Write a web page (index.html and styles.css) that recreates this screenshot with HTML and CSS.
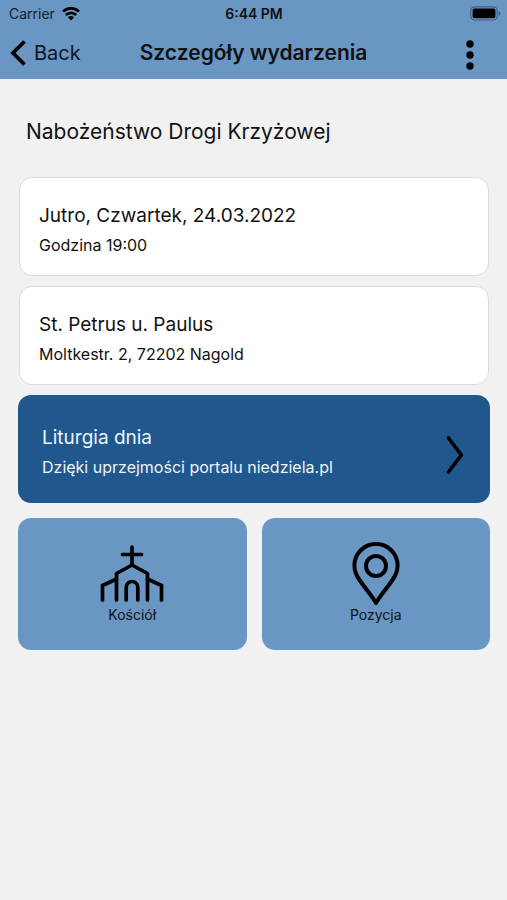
FILE: index.html
```html
<!DOCTYPE html>
<html lang="pl">
<head>
<meta charset="utf-8">
<meta name="viewport" content="width=device-width, initial-scale=1">
<title>Szczegóły wydarzenia</title>
<link rel="stylesheet" href="styles.css">
</head>
<body>
<header class="top">
  <div class="status">
    <div class="carrier">
      <span>Carrier</span>
      <svg width="18" height="14" viewBox="0 0 18 14" aria-hidden="true">
        <path d="M1 4.400C5.400.2 12.600.2 17 4.400" fill="none" stroke="#000" stroke-width="2.800"/>
        <path d="M3.800 8C6.700 5.200 11.300 5.200 14.200 8" fill="none" stroke="#000" stroke-width="2.500"/>
        <path d="M5.900 10.200Q9 7.800 12.100 10.200L9 13.400Z"/>
      </svg>
    </div>
    <div class="time">6:44 PM</div>
    <svg class="battery" width="31" height="15" viewBox="0 0 31 15" aria-hidden="true">
      <rect x=".8" y=".8" width="26.4" height="13.2" rx="4" fill="none" stroke="#42607f" stroke-width="1.2"/>
      <rect x="2.6" y="2.6" width="22.8" height="9.6" rx="2"/>
      <path d="M28.6 5Q30.6 5.6 30.6 7.4T28.6 9.8Z" fill="#42607f"/>
    </svg>
  </div>
  <nav class="nav">
    <a class="back" href="#">
      <svg width="16" height="26" viewBox="0 0 16 26" aria-hidden="true"><path d="M14.500 1.500L3 13L14.500 24.500" fill="none" stroke="#000" stroke-width="3.8"/></svg>
      <span>Back</span>
    </a>
    <h1 class="heading">Szczegóły wydarzenia</h1>
    <button class="more" type="button" aria-label="Menu">
      <svg width="8" height="30" viewBox="0 0 8 30" aria-hidden="true"><circle cx="4" cy="4" r="3.7"/><circle cx="4" cy="15" r="3.7"/><circle cx="4" cy="26" r="3.7"/></svg>
    </button>
  </nav>
</header>
<main class="content">
  <h2 class="event">Nabożeństwo Drogi Krzyżowej</h2>
  <section class="card">
    <p class="primary">Jutro, Czwartek, 24.03.2022</p>
    <p class="secondary">Godzina 19:00</p>
  </section>
  <section class="card">
    <p class="primary">St. Petrus u. Paulus</p>
    <p class="secondary">Moltkestr. 2, 72202 Nagold</p>
  </section>
  <a class="liturgy" href="#">
    <span class="lines">
      <span class="primary">Liturgia dnia</span>
      <span class="secondary">Dzięki uprzejmości portalu niedziela.pl</span>
    </span>
    <svg width="18" height="40" viewBox="0 0 18 40" aria-hidden="true"><path d="M2.500 3L15.400 20L2.500 37" fill="none" stroke="#000" stroke-width="3.6" stroke-linecap="round" stroke-linejoin="round"/></svg>
  </a>
  <div class="tiles">
    <button class="tile" type="button">
      <svg width="64" height="64" viewBox="0 0 64 64" fill="none" stroke="#000" stroke-width="3.7" stroke-linecap="round" stroke-linejoin="round" aria-hidden="true">
        <path d="M32 5V23M22.500 12.500H41.500"/>
        <path d="M16.500 58V31.500L32 23L47.500 31.500V58"/>
        <path d="M16.500 37L2.500 43.500V58M47.500 37L61.500 43.500V58"/>
        <path d="M26.200 58V45.300A5.800 5.800 0 0 1 37.800 45.300V58"/>
      </svg>
      <span>Kościół</span>
    </button>
    <button class="tile" type="button">
      <svg width="64" height="64" viewBox="0 0 64 64" fill="none" stroke="#000" stroke-width="4" stroke-linejoin="round" aria-hidden="true">
        <path d="M32 61C28 54 21 46 15.500 38C12 33 10.400 28 10.400 23.500A21.600 21.600 0 0 1 53.600 23.500C53.600 28 52 33 48.500 38C43 46 36 54 32 61Z"/>
        <circle cx="32" cy="24" r="10"/>
      </svg>
      <span>Pozycja</span>
    </button>
  </div>
</main>
</body>
</html>
```
FILE: styles.css
```css
* { box-sizing: border-box; }
body {
  margin: 0;
  min-height: 100vh;
  background: #f1f1f1;
  color: #111;
  font-family: Inter, "Liberation Sans", sans-serif;
}
h1, h2, p { margin: 0; }
svg { display: block; flex: none; }
a { color: inherit; text-decoration: none; }
button { border: 0; padding: 0; color: inherit; font: inherit; }

.top { background: #6996c2; padding-bottom: 1px; }
.status {
  display: grid;
  grid-template-columns: 1fr auto 1fr;
  align-items: center;
  height: 27px;
  padding: 0 6px 0 7px;
  font-size: 14px;
}
.carrier { display: flex; align-items: center; gap: 7px; padding-left: 2px; color: #14202c; }
.time { font-weight: 600; }
.battery { justify-self: end; }
.nav {
  display: grid;
  grid-template-columns: 1fr auto 1fr;
  align-items: center;
  height: 51px;
  padding: 0 33px 0 10px;
}
.nav .heading { margin-left: 23px; }
.back { display: flex; align-items: center; gap: 8px; font-size: 20px; color: #0b1620; }
.heading { font-size: 21px; font-weight: 600; line-height: 26px; }
.more { justify-self: end; background: none; padding-top: 4px; }

.content { padding: 40px 17px 18px 18px; }
.event { padding: 0 8px; margin-bottom: 32px; font-size: 21px; font-weight: 400; line-height: 26px; }
.card {
  margin: 0 1px 10px;
  padding: 24px 19px 18px;
  background: #fff;
  border: 1px solid #dcdcdc;
  border-radius: 13px;
}
.primary { display: block; font-size: 19px; line-height: 28px; }
.secondary { display: block; margin-top: 3px; font-size: 16px; line-height: 24px; }
.liturgy {
  display: flex;
  align-items: center;
  justify-content: space-between;
  min-height: 108px;
  padding: 12px 26px 12px 24px;
  border-radius: 13px;
  background: #20578c;
  color: #eef4fa;
}
.lines { padding-top: 4px; }
.liturgy svg { margin-top: 12px; }
.tiles { display: grid; grid-template-columns: 1fr 1fr; gap: 15px; margin-top: 15px; }
.tile {
  display: flex;
  flex-direction: column;
  align-items: center;
  height: 132px;
  padding-top: 24px;
  border-radius: 13px;
  background: #6996c2;
  font-size: 14px;
  line-height: 18px;
}
```
